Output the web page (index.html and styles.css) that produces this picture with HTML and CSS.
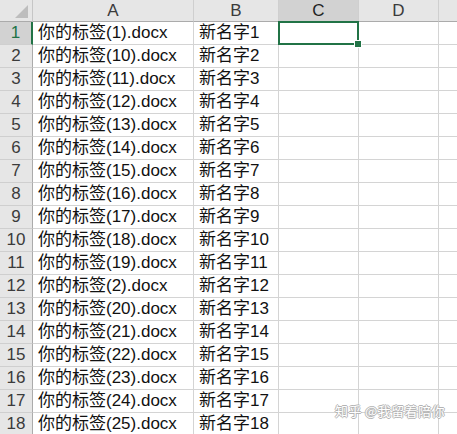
FILE: index.html
```html
<!DOCTYPE html>
<html lang="zh-CN">
<head>
<meta charset="UTF-8">
<title>工作表</title>
<link rel="stylesheet" href="styles.css">
</head>
<body>

<!-- 表格 -->
<div class="sheet" id="sheet">
    <div class="corner"><span class="tri"></span></div>
    <div class="col-head">A</div>
    <div class="col-head">B</div>
    <div class="col-head on">C</div>
    <div class="col-head">D</div>
    <div class="col-head last"></div>
</div>

<!-- 水印 -->
<div class="mark">知乎 @我留着陪你</div>

<script>
    const sheet = document.getElementById('sheet');
    const nums = [1, 10, 11, 12, 13, 14, 15, 16, 17, 18, 19, 2, 20, 21, 22, 23, 24, 25];

    nums.forEach((n, i) => {
    const row = i + 1;
    const cells = [
        ['row-head' + (row === 1 ? ' on' : ''), row],
        ['cell', '你的标签(' + n + ').docx'],
        ['cell', '新名字' + row],
        ['cell' + (row === 1 ? ' picked' : ''), ''],
        ['cell', ''],
        ['cell last', '']
    ];
    cells.forEach(c => {
        const div = document.createElement('div');
        div.className = c[0];
        div.textContent = c[1];
        if (row === 1 && c[0].indexOf('picked') > -1) {
        div.innerHTML = '<span class="sel"><span class="handle"></span></span>';
        }
        sheet.appendChild(div);
    });
    });
</script>

</body>
</html>
```

FILE: styles.css
```css
body {
margin: 0;
background: #fff;
overflow: hidden;
font-family: "Liberation Sans", "Noto Sans CJK SC", sans-serif;
}

.sheet {
display: grid;
grid-template-columns: 33px 161px 85px 80px 80px 1fr;
grid-template-rows: 22px;
grid-auto-rows: 23px;
width: 457px;
}

.corner {
position: relative;
background: #e6e6e6;
border-right: 1px solid #c6c6c6;
border-bottom: 1px solid #ababab;
}

.corner .tri {
position: absolute;
right: 4px;
bottom: 3px;
width: 0;
height: 0;
border-left: 13px solid transparent;
border-bottom: 13px solid #bdbdbd;
}

.col-head {
background: #e6e6e6;
color: #3b3b3b;
font-size: 17px;
line-height: 21px;
text-align: center;
border-right: 1px solid #cfcfcf;
border-bottom: 1px solid #ababab;
}

.col-head.on {
background: #d2d2d2;
color: #222;
}

.row-head {
background: #e6e6e6;
color: #3b3b3b;
font-size: 17px;
line-height: 22px;
text-align: center;
border-right: 1px solid #ababab;
border-bottom: 1px solid #cfcfcf;
}

.row-head.on {
background: #d2d2d2;
color: #217346;
border-right: 2px solid #217346;
}

.cell {
position: relative;
color: #111;
font-size: 17px;
line-height: 22px;
padding-left: 5px;
white-space: nowrap;
overflow: hidden;
border-right: 1px solid #d4d4d4;
border-bottom: 1px solid #d4d4d4;
}

.cell.picked {
overflow: visible;
}

.last {
border-right: none;
}

.sel {
position: absolute;
left: -1px;
top: -1px;
right: -1px;
bottom: -1px;
border: 2px solid #217346;
z-index: 2;
}

.sel .handle {
position: absolute;
right: -5px;
bottom: -5px;
width: 6px;
height: 6px;
background: #217346;
border: 1px solid #fff;
}

.mark {
position: absolute;
left: 335px;
top: 401px;
font-family: "Noto Sans CJK SC", sans-serif;
font-size: 13px;
color: #fff;
letter-spacing: 0.4px;
text-shadow: 1px 0 0 #b4b4b4, -1px 0 0 #b4b4b4, 0 1px 0 #b4b4b4, 0 -1px 0 #b4b4b4;
}
```
